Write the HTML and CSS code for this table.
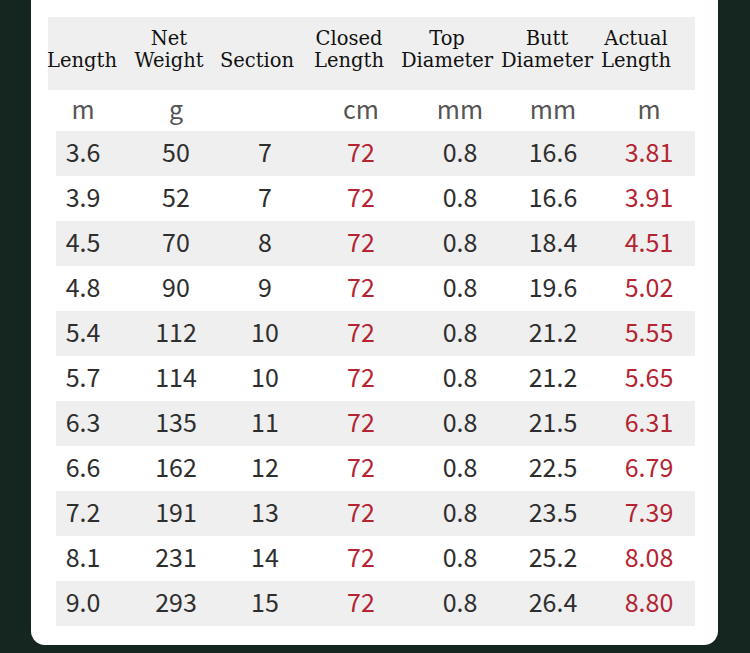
FILE: index.html
```html
<!DOCTYPE html>
<html lang="en">
<head>
<meta charset="utf-8">
<title>Specifications</title>
<link rel="stylesheet" href="styles.css">
</head>
<body>
<div class="card">
  <div class="head">
    <div class="hc"><span>Length</span></div>
    <div class="hc"><span>Net<br>Weight</span></div>
    <div class="hc"><span>Section</span></div>
    <div class="hc"><span>Closed<br>Length</span></div>
    <div class="hc"><span>Top<br>Diameter</span></div>
    <div class="hc"><span>Butt<br>Diameter</span></div>
    <div class="hc"><span>Actual<br>Length</span></div>
  </div>
  <div class="row units">
    <div class="c"><span>m</span></div>
    <div class="c"><span>g</span></div>
    <div class="c"><span></span></div>
    <div class="c"><span>cm</span></div>
    <div class="c"><span>mm</span></div>
    <div class="c"><span>mm</span></div>
    <div class="c"><span>m</span></div>
  </div>
  <div class="row alt"><div class="c"><span>3.6</span></div><div class="c"><span>50</span></div><div class="c"><span>7</span></div><div class="c red"><span>72</span></div><div class="c"><span>0.8</span></div><div class="c"><span>16.6</span></div><div class="c red"><span>3.81</span></div></div>
  <div class="row"><div class="c"><span>3.9</span></div><div class="c"><span>52</span></div><div class="c"><span>7</span></div><div class="c red"><span>72</span></div><div class="c"><span>0.8</span></div><div class="c"><span>16.6</span></div><div class="c red"><span>3.91</span></div></div>
  <div class="row alt"><div class="c"><span>4.5</span></div><div class="c"><span>70</span></div><div class="c"><span>8</span></div><div class="c red"><span>72</span></div><div class="c"><span>0.8</span></div><div class="c"><span>18.4</span></div><div class="c red"><span>4.51</span></div></div>
  <div class="row"><div class="c"><span>4.8</span></div><div class="c"><span>90</span></div><div class="c"><span>9</span></div><div class="c red"><span>72</span></div><div class="c"><span>0.8</span></div><div class="c"><span>19.6</span></div><div class="c red"><span>5.02</span></div></div>
  <div class="row alt"><div class="c"><span>5.4</span></div><div class="c"><span>112</span></div><div class="c"><span>10</span></div><div class="c red"><span>72</span></div><div class="c"><span>0.8</span></div><div class="c"><span>21.2</span></div><div class="c red"><span>5.55</span></div></div>
  <div class="row"><div class="c"><span>5.7</span></div><div class="c"><span>114</span></div><div class="c"><span>10</span></div><div class="c red"><span>72</span></div><div class="c"><span>0.8</span></div><div class="c"><span>21.2</span></div><div class="c red"><span>5.65</span></div></div>
  <div class="row alt"><div class="c"><span>6.3</span></div><div class="c"><span>135</span></div><div class="c"><span>11</span></div><div class="c red"><span>72</span></div><div class="c"><span>0.8</span></div><div class="c"><span>21.5</span></div><div class="c red"><span>6.31</span></div></div>
  <div class="row"><div class="c"><span>6.6</span></div><div class="c"><span>162</span></div><div class="c"><span>12</span></div><div class="c red"><span>72</span></div><div class="c"><span>0.8</span></div><div class="c"><span>22.5</span></div><div class="c red"><span>6.79</span></div></div>
  <div class="row alt"><div class="c"><span>7.2</span></div><div class="c"><span>191</span></div><div class="c"><span>13</span></div><div class="c red"><span>72</span></div><div class="c"><span>0.8</span></div><div class="c"><span>23.5</span></div><div class="c red"><span>7.39</span></div></div>
  <div class="row"><div class="c"><span>8.1</span></div><div class="c"><span>231</span></div><div class="c"><span>14</span></div><div class="c red"><span>72</span></div><div class="c"><span>0.8</span></div><div class="c"><span>25.2</span></div><div class="c red"><span>8.08</span></div></div>
  <div class="row alt"><div class="c"><span>9.0</span></div><div class="c"><span>293</span></div><div class="c"><span>15</span></div><div class="c red"><span>72</span></div><div class="c"><span>0.8</span></div><div class="c"><span>26.4</span></div><div class="c red"><span>8.80</span></div></div>
</div>
</body>
</html>
```
FILE: styles.css
```css
html, body {
  margin: 0;
  padding: 0;
}
body {
  background: #14261f;
  width: 750px;
  height: 653px;
  overflow: hidden;
}
.card {
  margin-left: 31px;
  width: 687px;
  box-sizing: border-box;
  background: #ffffff;
  border-radius: 0 0 14px 14px;
  padding: 17px 23px 19px 17px;
}
.head {
  display: grid;
  grid-template-columns: 68px 106px 70px 114px 82px 118px 60px 1fr;
  height: 73px;
  box-sizing: border-box;
  padding-bottom: 18px;
  align-items: end;
  background: #efefef;
  font-family: "DejaVu Serif", "Liberation Serif", serif;
  font-size: 19.5px;
  line-height: 22px;
  color: #111111;
}
.hc {
  display: flex;
  justify-content: center;
  text-align: center;
  white-space: nowrap;
}
.row {
  display: grid;
  grid-template-columns: 54px 132px 46px 146px 52px 134px 58px 1fr;
  margin-left: 8px;
  height: 45px;
  align-items: center;
  font-family: "Noto Sans CJK SC", "Noto Sans", sans-serif;
  font-size: 25px;
  line-height: 41px;
  color: #2e2e2e;
}
.row.units {
  height: 41px;
  line-height: 37px;
  color: #555555;
}
.row.alt {
  background: #efefef;
}
.c {
  display: flex;
  justify-content: center;
  white-space: nowrap;
  padding-bottom: 4px;
}
.c.red {
  color: #b52432;
}
```
